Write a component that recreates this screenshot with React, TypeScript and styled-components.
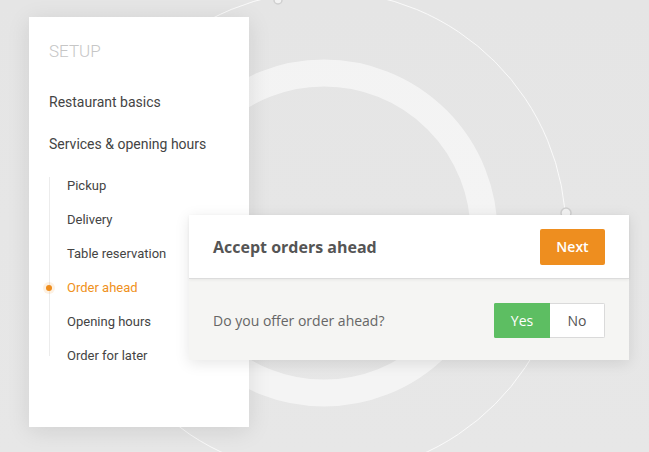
import React from "react";
import styled, { createGlobalStyle } from "styled-components";

const GlobalStyle = createGlobalStyle`
  html, body {
    margin: 0;
    padding: 0;
    background: #e6e6e6;
    overflow: hidden;
  }
  * {
    box-sizing: border-box;
  }
`;

const Stage = styled.div`
  position: relative;
  display: flex;
  align-items: flex-start;
  width: 649px;
  height: 452px;
  padding: 17px 0 0 29px;
  background: linear-gradient(180deg, #e5e5e5 0%, #e7e7e7 100%);
  overflow: hidden;
`;

const Backdrop = styled.svg`
  position: absolute;
  left: 0;
  top: 0;
  width: 649px;
  height: 452px;
`;

const Sidebar = styled.nav`
  position: relative;
  z-index: 1;
  flex: none;
  width: 220px;
  height: 410px;
  padding: 24px 20px 0;
  background: #ffffff;
  box-shadow: 0 4px 22px rgba(0, 0, 0, 0.1);
  font-family: Roboto, "Liberation Sans", sans-serif;
`;

const SetupTitle = styled.div`
  height: 20px;
  line-height: 20px;
  font-size: 17px;
  font-weight: 300;
  color: #c6c6c6;
  margin-bottom: 20px;
`;

const MainItem = styled.div`
  height: 42px;
  line-height: 42px;
  font-size: 14px;
  color: #444444;
`;

const SubList = styled.div`
  position: relative;
  margin-top: 4px;
  padding-left: 18px;

  &::before {
    content: "";
    position: absolute;
    left: 0;
    top: 8px;
    bottom: 17px;
    width: 1px;
    background: #ececec;
  }
`;

const SubItem = styled.div<{ $active?: boolean }>`
  position: relative;
  height: 34px;
  line-height: 34px;
  font-size: 13px;
  color: ${(p) => (p.$active ? "#ef9120" : "#444444")};
`;

const ActiveDot = styled.span`
  position: absolute;
  left: -21px;
  top: 14px;
  width: 6px;
  height: 6px;
  border-radius: 50%;
  background: #ef8d1c;
  box-shadow: 0 0 0 3px rgba(239, 141, 28, 0.12);
`;

const Panel = styled.section`
  position: relative;
  z-index: 2;
  flex: none;
  width: 440px;
  margin-top: 198px;
  margin-left: -60px;
  background: #f5f5f3;
  box-shadow: 0 3px 14px rgba(0, 0, 0, 0.1);
  font-family: "Open Sans", "Liberation Sans", sans-serif;
`;

const PanelHeader = styled.header`
  display: flex;
  align-items: center;
  justify-content: space-between;
  height: 64px;
  padding: 0 24px;
  background: #ffffff;
  border-bottom: 1px solid #dcdcdc;
  box-shadow: 0 1px 3px rgba(0, 0, 0, 0.06);
`;

const PanelTitle = styled.h2`
  margin: 0;
  font-size: 16px;
  font-weight: 700;
  color: #555555;
`;

const NextButton = styled.button`
  width: 65px;
  height: 36px;
  border: 0;
  border-radius: 2px;
  background: #ee8e1f;
  color: #ffffff;
  font-family: inherit;
  font-size: 14px;
  font-weight: 600;
`;

const PanelBody = styled.div`
  display: flex;
  align-items: flex-start;
  justify-content: space-between;
  height: 81px;
  padding: 24px 24px 0;
`;

const Question = styled.span`
  line-height: 35px;
  font-size: 14px;
  color: #666666;
`;

const Toggle = styled.div`
  display: flex;
  height: 35px;
  border-radius: 2px;
  overflow: hidden;
`;

const ToggleOption = styled.button<{ $on?: boolean }>`
  width: ${(p) => (p.$on ? "56px" : "55px")};
  height: 35px;
  border: 1px solid ${(p) => (p.$on ? "#5dbe62" : "#dadada")};
  border-left-width: ${(p) => (p.$on ? "1px" : "0")};
  background: ${(p) => (p.$on ? "#5dbe62" : "#ffffff")};
  color: ${(p) => (p.$on ? "#ffffff" : "#555555")};
  font-family: inherit;
  font-size: 14px;
  font-weight: 400;
`;

const subItems = [
  "Pickup",
  "Delivery",
  "Table reservation",
  "Order ahead",
  "Opening hours",
  "Order for later",
];

const App = () => {
  return (
    <>
      <GlobalStyle />
      <Stage>
        <Backdrop viewBox="0 0 649 452">
          <circle
            cx="324"
            cy="233"
            r="160"
            fill="none"
            stroke="#ffffff"
            strokeOpacity="0.55"
            strokeWidth="27"
          />
          <circle
            cx="324"
            cy="233"
            r="242"
            fill="none"
            stroke="#ffffff"
            strokeOpacity="0.8"
            strokeWidth="1"
          />
          <circle cx="278" cy="0" r="4" fill="#f3f3f3" stroke="#cfcfcf" strokeWidth="1.5" />
          <circle cx="566" cy="213" r="5" fill="#f3f3f3" stroke="#cfcfcf" strokeWidth="1.5" />
        </Backdrop>

        <Sidebar>
          <SetupTitle>SETUP</SetupTitle>
          <MainItem>Restaurant basics</MainItem>
          <MainItem>Services &amp; opening hours</MainItem>
          <SubList>
            {subItems.map((item) => (
              <SubItem key={item} $active={item === "Order ahead"}>
                {item === "Order ahead" && <ActiveDot />}
                {item}
              </SubItem>
            ))}
          </SubList>
        </Sidebar>

        <Panel>
          <PanelHeader>
            <PanelTitle>Accept orders ahead</PanelTitle>
            <NextButton>Next</NextButton>
          </PanelHeader>
          <PanelBody>
            <Question>Do you offer order ahead?</Question>
            <Toggle>
              <ToggleOption $on>Yes</ToggleOption>
              <ToggleOption>No</ToggleOption>
            </Toggle>
          </PanelBody>
        </Panel>
      </Stage>
    </>
  );
};

export default App;
